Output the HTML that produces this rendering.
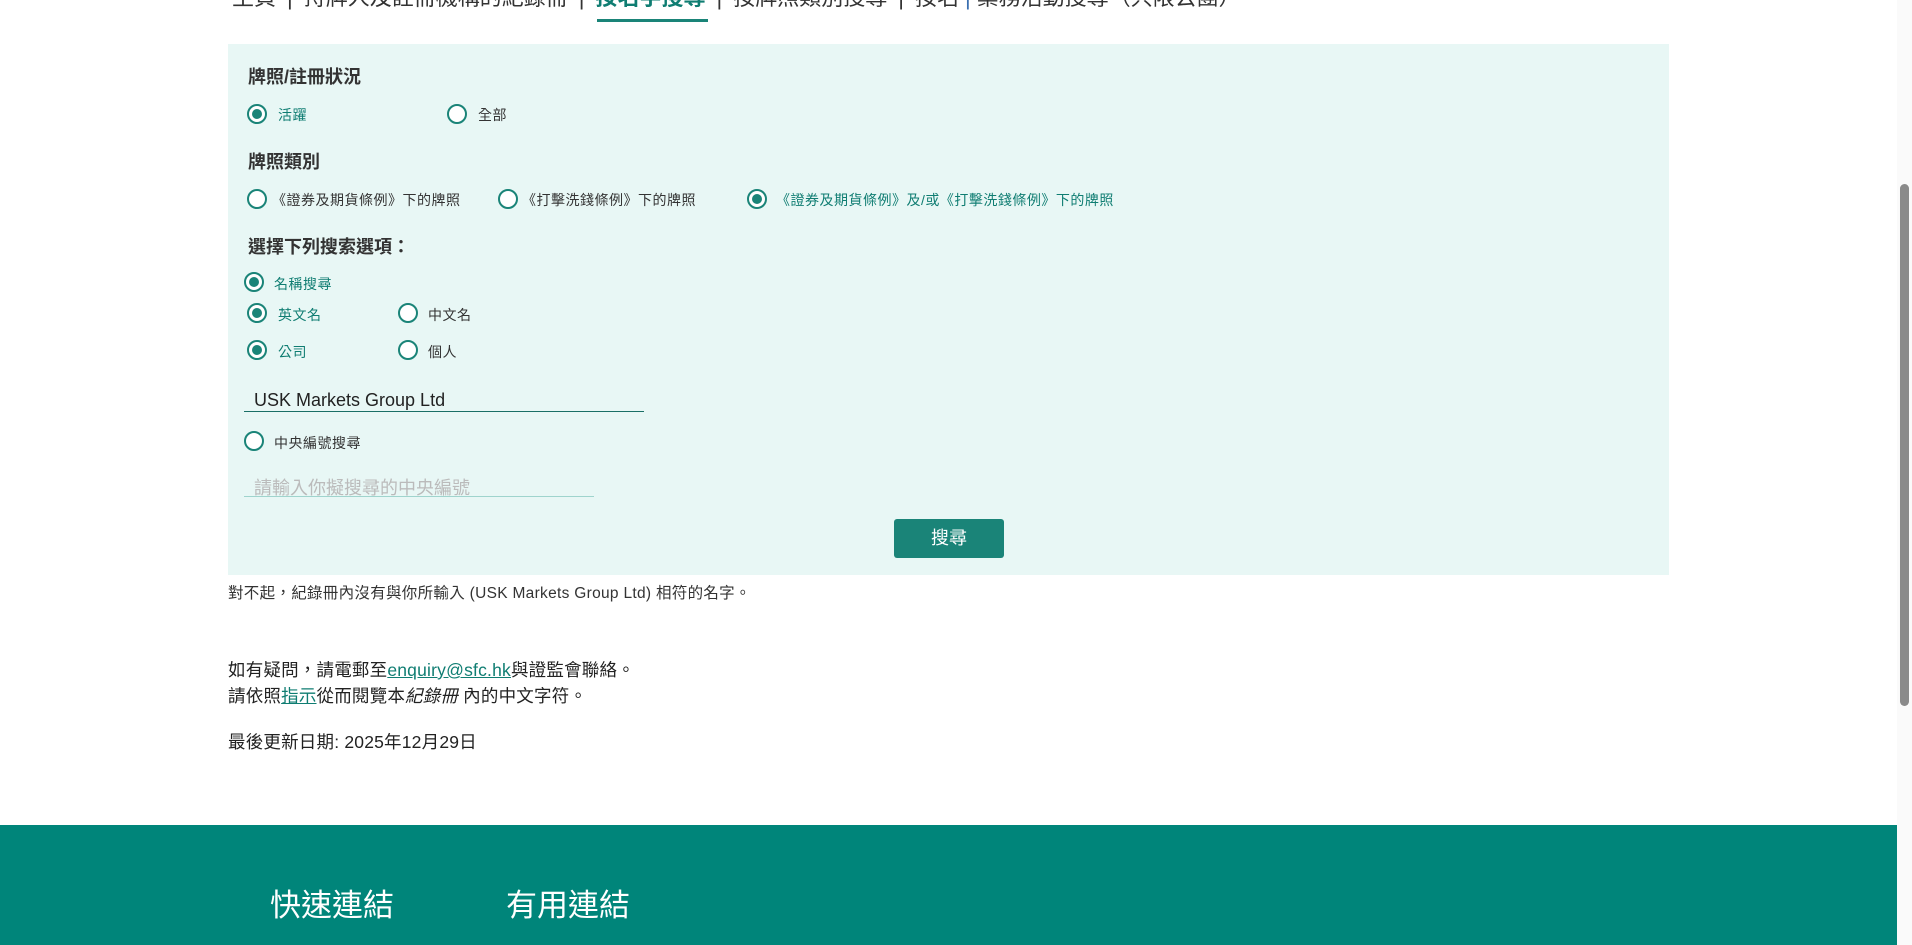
<!DOCTYPE html>
<html><head><meta charset="utf-8"><style>
*{margin:0;padding:0;box-sizing:border-box}
html,body{width:1912px;height:945px;overflow:hidden;background:#fff;font-family:"Liberation Sans","Noto Sans CJK TC",sans-serif;color:#222}
.a{position:absolute;white-space:nowrap}
.nav{left:232px;top:-17px;font-size:22px;color:#333;line-height:30px}
.nav .act{color:#0f7d72;font-weight:bold}
.nav .s{margin:0 11px}
.nav .s2{margin:0 6px;color:#3a6fb0}
.panel{left:228px;top:44px;width:1441px;height:531px;background:#e8f7f5}
.h{font-size:18px;font-weight:bold;color:#333}
.r{width:20px;height:20px;border:2px solid #1a8478;border-radius:50%;background:#fff}
.r.on::after{content:"";position:absolute;left:3px;top:3px;width:10px;height:10px;border-radius:50%;background:#1a8478}
.l{font-size:14px;color:#333;letter-spacing:0.5px}
.l.on{color:#0f7d72}
.btn{left:894px;top:519px;width:110px;height:39px;background:#1a8478;border-radius:3px;color:#fff;font-size:18px;text-align:center;line-height:39px}
.t{font-size:17.5px;color:#222;letter-spacing:0.2px}
a{color:#0f7d72;text-decoration:underline}
.foot{left:0;top:825px;width:1897px;height:120px;background:#00857a}
.sb{left:1897px;top:0;width:15px;height:945px;background:#fafafa}
.th{left:1900px;top:184px;width:9px;height:522px;background:#8a8a8a;border-radius:5px}
</style></head><body>
<div class="a nav">主頁<span class="s">|</span>持牌人及註冊機構的紀錄冊<span class="s">|</span><span class="act">按名字搜尋</span><span class="s">|</span>按牌照類別搜尋<span class="s">|</span>按名<span class="s2">|</span>業務活動搜尋（只限公團）</div>
<div class="a" style="left:597px;top:19px;width:111px;height:3px;background:#1a8478"></div>
<div class="a panel"></div>
<div class="a h" style="left:248px;top:63px">牌照/註冊狀況</div>
<div class="a r on" style="left:247px;top:104px"></div><div class="a l on" style="left:278px;top:105px">活躍</div>
<div class="a r" style="left:447px;top:104px"></div><div class="a l" style="left:478px;top:105px">全部</div>
<div class="a h" style="left:248px;top:148px">牌照類別</div>
<div class="a r" style="left:247px;top:189px"></div><div class="a l" style="left:272px;top:190px">《證券及期貨條例》下的牌照</div>
<div class="a r" style="left:498px;top:189px"></div><div class="a l" style="left:522px;top:190px">《打擊洗錢條例》下的牌照</div>
<div class="a r on" style="left:747px;top:189px"></div><div class="a l on" style="left:776px;top:190px">《證券及期貨條例》及/或《打擊洗錢條例》下的牌照</div>
<div class="a h" style="left:248px;top:233px">選擇下列搜索選項：</div>
<div class="a r on" style="left:244px;top:272px"></div><div class="a l on" style="left:274px;top:274px">名稱搜尋</div>
<div class="a r on" style="left:247px;top:303px"></div><div class="a l on" style="left:278px;top:305px">英文名</div>
<div class="a r" style="left:398px;top:303px"></div><div class="a l" style="left:428px;top:305px">中文名</div>
<div class="a r on" style="left:247px;top:340px"></div><div class="a l on" style="left:278px;top:342px">公司</div>
<div class="a r" style="left:398px;top:340px"></div><div class="a l" style="left:428px;top:342px">個人</div>
<div class="a" style="left:254px;top:390px;font-size:18px;color:#222">USK Markets Group Ltd</div>
<div class="a" style="left:244px;top:411px;width:400px;height:1px;background:#1a6f66"></div>
<div class="a r" style="left:244px;top:431px"></div><div class="a l" style="left:274px;top:433px">中央編號搜尋</div>
<div class="a" style="left:254px;top:474px;font-size:18px;color:#bbb">請輸入你擬搜尋的中央編號</div>
<div class="a" style="left:244px;top:496px;width:350px;height:1px;background:#9fd4cd"></div>
<div class="a btn">搜尋</div>
<div class="a" style="left:228px;top:581px;font-size:15.5px;color:#333;letter-spacing:0.3px">對不起，紀錄冊內沒有與你所輸入 (USK Markets Group Ltd) 相符的名字。</div>
<div class="a t" style="left:228px;top:657px">如有疑問，請電郵至<a>enquiry@sfc.hk</a>與證監會聯絡。</div>
<div class="a t" style="left:228px;top:683px">請依照<a>指示</a>從而閱覽本<i>紀錄冊</i> 內的中文字符。</div>
<div class="a t" style="left:228px;top:729px">最後更新日期: 2025年12月29日</div>
<div class="a foot"></div>
<div class="a" style="left:270px;top:880px;font-size:31px;color:#fff">快速連結</div>
<div class="a" style="left:506px;top:880px;font-size:31px;color:#fff">有用連結</div>
<div class="a sb"></div>
<div class="a th"></div>
</body></html>
